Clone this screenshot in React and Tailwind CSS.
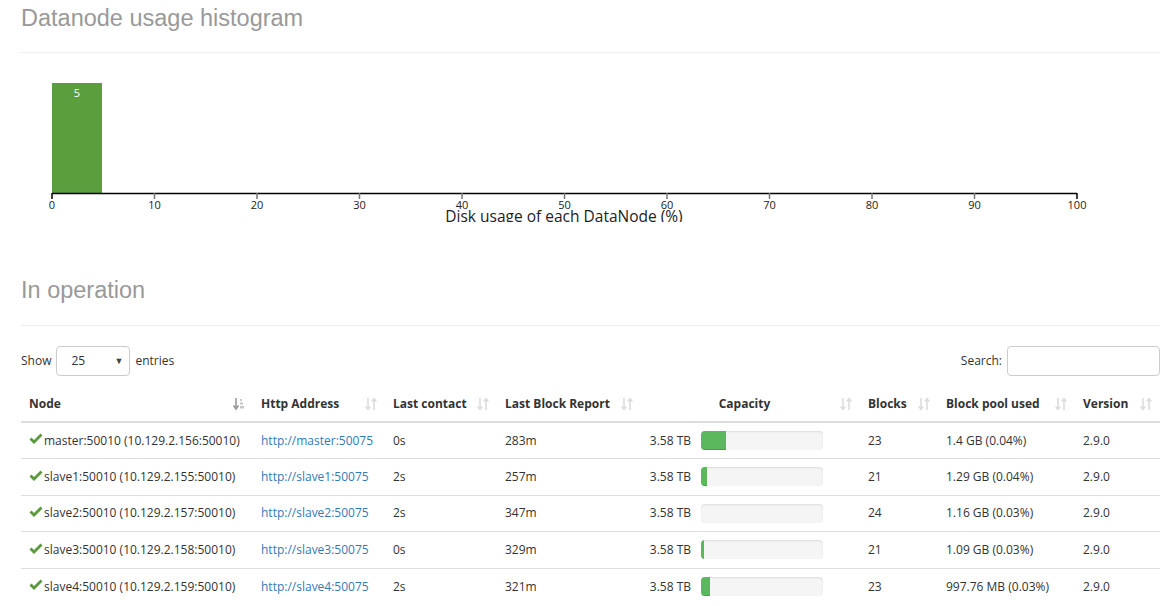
import React from "react";

const SortIcon = ({ active }) => (
  <svg width="12" height="14" viewBox="0 0 12 14" className="inline-block">
    {active ? (
      <g>
        <path d="M3 1 V11 M0.5 8.5 L3 12 L5.5 8.5" stroke="#9a9a9a" strokeWidth="1.6" fill="none" />
        <rect x="7" y="2" width="2" height="2" fill="#c8c8c8" />
        <rect x="7" y="5.5" width="3" height="2" fill="#c8c8c8" />
        <rect x="7" y="9" width="4" height="2.5" fill="#c8c8c8" />
      </g>
    ) : (
      <g stroke="#dddddd" strokeWidth="1.6" fill="none">
        <path d="M3 1 V12 M0.8 9.5 L3 12.5 L5.2 9.5" />
        <path d="M9 13 V2 M6.8 4.5 L9 1.5 L11.2 4.5" />
      </g>
    )}
  </svg>
);

const Check = () => (
  <svg width="14" height="12" viewBox="0 0 14 12" className="inline-block mr-[1px] -mt-[4px]">
    <path d="M0.5 6.5 L2.5 4.5 L5 7 L11.5 0.5 L13.5 2.5 L5 11 Z" fill="#5a9a3d" />
  </svg>
);

const rows = [
  { node: "master:50010 (10.129.2.156:50010)", http: "http://master:50075", lc: "0s", lbr: "283m", bar: 25, blocks: "23", pool: "1.4 GB (0.04%)" },
  { node: "slave1:50010 (10.129.2.155:50010)", http: "http://slave1:50075", lc: "2s", lbr: "257m", bar: 6, blocks: "21", pool: "1.29 GB (0.04%)" },
  { node: "slave2:50010 (10.129.2.157:50010)", http: "http://slave2:50075", lc: "2s", lbr: "347m", bar: 0, blocks: "24", pool: "1.16 GB (0.03%)" },
  { node: "slave3:50010 (10.129.2.158:50010)", http: "http://slave3:50075", lc: "0s", lbr: "329m", bar: 3, blocks: "21", pool: "1.09 GB (0.03%)" },
  { node: "slave4:50010 (10.129.2.159:50010)", http: "http://slave4:50075", lc: "2s", lbr: "321m", bar: 9, blocks: "23", pool: "997.76 MB (0.03%)" },
];

const ticks = [0, 10, 20, 30, 40, 50, 60, 70, 80, 90, 100];

export default function App() {
  const font = { fontFamily: '"Open Sans", "Noto Sans", sans-serif' };
  return (
    <div className="w-[1168px] h-[606px] overflow-hidden bg-white text-[#333]" style={font}>
      <div className="pl-[21px] pr-[8px]">
        <div className="pt-[4px] pb-[20px] border-b border-[#eeeeee]">
          <h1 className="text-[23.5px] leading-[28px] text-[#999999] font-normal" style={{ fontFamily: '"Liberation Sans", Arial, sans-serif' }}>
            Datanode usage histogram
          </h1>
        </div>
        <div className="h-[169px] overflow-hidden">
          <svg width="1100" height="190" className="block" style={{ fontFamily: '"Open Sans", "Noto Sans", sans-serif' }}>
            <rect x="31" y="30" width="50" height="110" fill="#5a9e3e" />
            <text x="56" y="44" fill="#ffffff" fontSize="11" textAnchor="middle">5</text>
            <line x1="31" y1="140.5" x2="1056" y2="140.5" stroke="#000" strokeWidth="1.5" />
            {ticks.map((t, i) => {
              const x = 31 + i * 102.5;
              const edge = i === 0 || i === 10;
              return (
                <g key={t}>
                  <line x1={x} y1="140" x2={x} y2="146" stroke={edge ? "#000" : "#777"} strokeWidth="1.5" />
                  <text x={x} y="156" fontSize="11" textAnchor="middle" fill="#222">{t}</text>
                </g>
              );
            })}
            <text x="543" y="169" fontSize="15.5" textAnchor="middle" fill="#222">Disk usage of each DataNode (%)</text>
          </svg>
        </div>

        <div className="mt-[54px] pb-[21px] border-b border-[#eeeeee]">
          <h1 className="text-[23.5px] leading-[28px] text-[#999999] font-normal" style={{ fontFamily: '"Liberation Sans", Arial, sans-serif' }}>
            In operation
          </h1>
        </div>

        <div className="mt-[20px] h-[30px] flex items-center justify-between text-[12px]">
          <div className="flex items-center">
            <span>Show</span>
            <div className="ml-[5px] mr-[5px] w-[74px] h-[30px] border border-[#cccccc] rounded-[4px] flex items-center justify-between pl-[14px] pr-[6px]">
              <span>25</span>
              <span className="text-[9px] text-[#444]">▼</span>
            </div>
            <span>entries</span>
          </div>
          <div className="flex items-center">
            <span>Search:</span>
            <div className="ml-[5px] w-[153px] h-[30px] border border-[#cccccc] rounded-[4px]" />
          </div>
        </div>

        <table className="mt-[10px] w-[1139px] border-collapse text-[12px] table-fixed">
          <colgroup>
            <col className="w-[232px]" />
            <col className="w-[132px]" />
            <col className="w-[112px]" />
            <col className="w-[144px]" />
            <col className="w-[219px]" />
            <col className="w-[78px]" />
            <col className="w-[137px]" />
            <col className="w-[85px]" />
          </colgroup>
          <thead>
            <tr className="border-b-2 border-[#dddddd]">
              {[
                ["Node", true],
                ["Http Address"],
                ["Last contact"],
                ["Last Block Report"],
                ["Capacity"],
                ["Blocks"],
                ["Block pool used"],
                ["Version"],
              ].map(([h, active], i) => (
                <th key={h} className="h-[36px] px-[8px] py-0 text-left font-bold leading-[20px]">
                  <div className="flex items-center justify-between">
                    {i === 4 ? (
                      <span className="flex-1 text-center">{h}</span>
                    ) : (
                      <span>{h}</span>
                    )}
                    <SortIcon active={active} />
                  </div>
                </th>
              ))}
            </tr>
          </thead>
          <tbody>
            {rows.map((r, i) => (
              <tr key={r.node} className={i > 0 ? "border-t border-[#dddddd]" : ""}>
                <td className="h-[36.5px] px-[8px] py-0 whitespace-nowrap">
                  <Check />
                  {r.node}
                </td>
                <td className="px-[8px] whitespace-nowrap text-[#337ab7]">{r.http}</td>
                <td className="px-[8px]">{r.lc}</td>
                <td className="px-[8px]">{r.lbr}</td>
                <td className="px-[8px]">
                  <div className="flex items-center">
                    <span className="w-[42px] text-right whitespace-nowrap">3.58 TB</span>
                    <div className="ml-[10px] w-[122px] h-[19px] rounded-[4px] bg-[#f5f5f5] shadow-[inset_0_1px_2px_rgba(0,0,0,0.1)] overflow-hidden">
                      <div className="h-full bg-[#5cb85c] shadow-[inset_0_-1px_0_rgba(0,0,0,0.15)]" style={{ width: r.bar + "px" }} />
                    </div>
                  </div>
                </td>
                <td className="px-[8px]">{r.blocks}</td>
                <td className="px-[8px] whitespace-nowrap">{r.pool}</td>
                <td className="px-[8px]">2.9.0</td>
              </tr>
            ))}
          </tbody>
        </table>
      </div>
    </div>
  );
}
